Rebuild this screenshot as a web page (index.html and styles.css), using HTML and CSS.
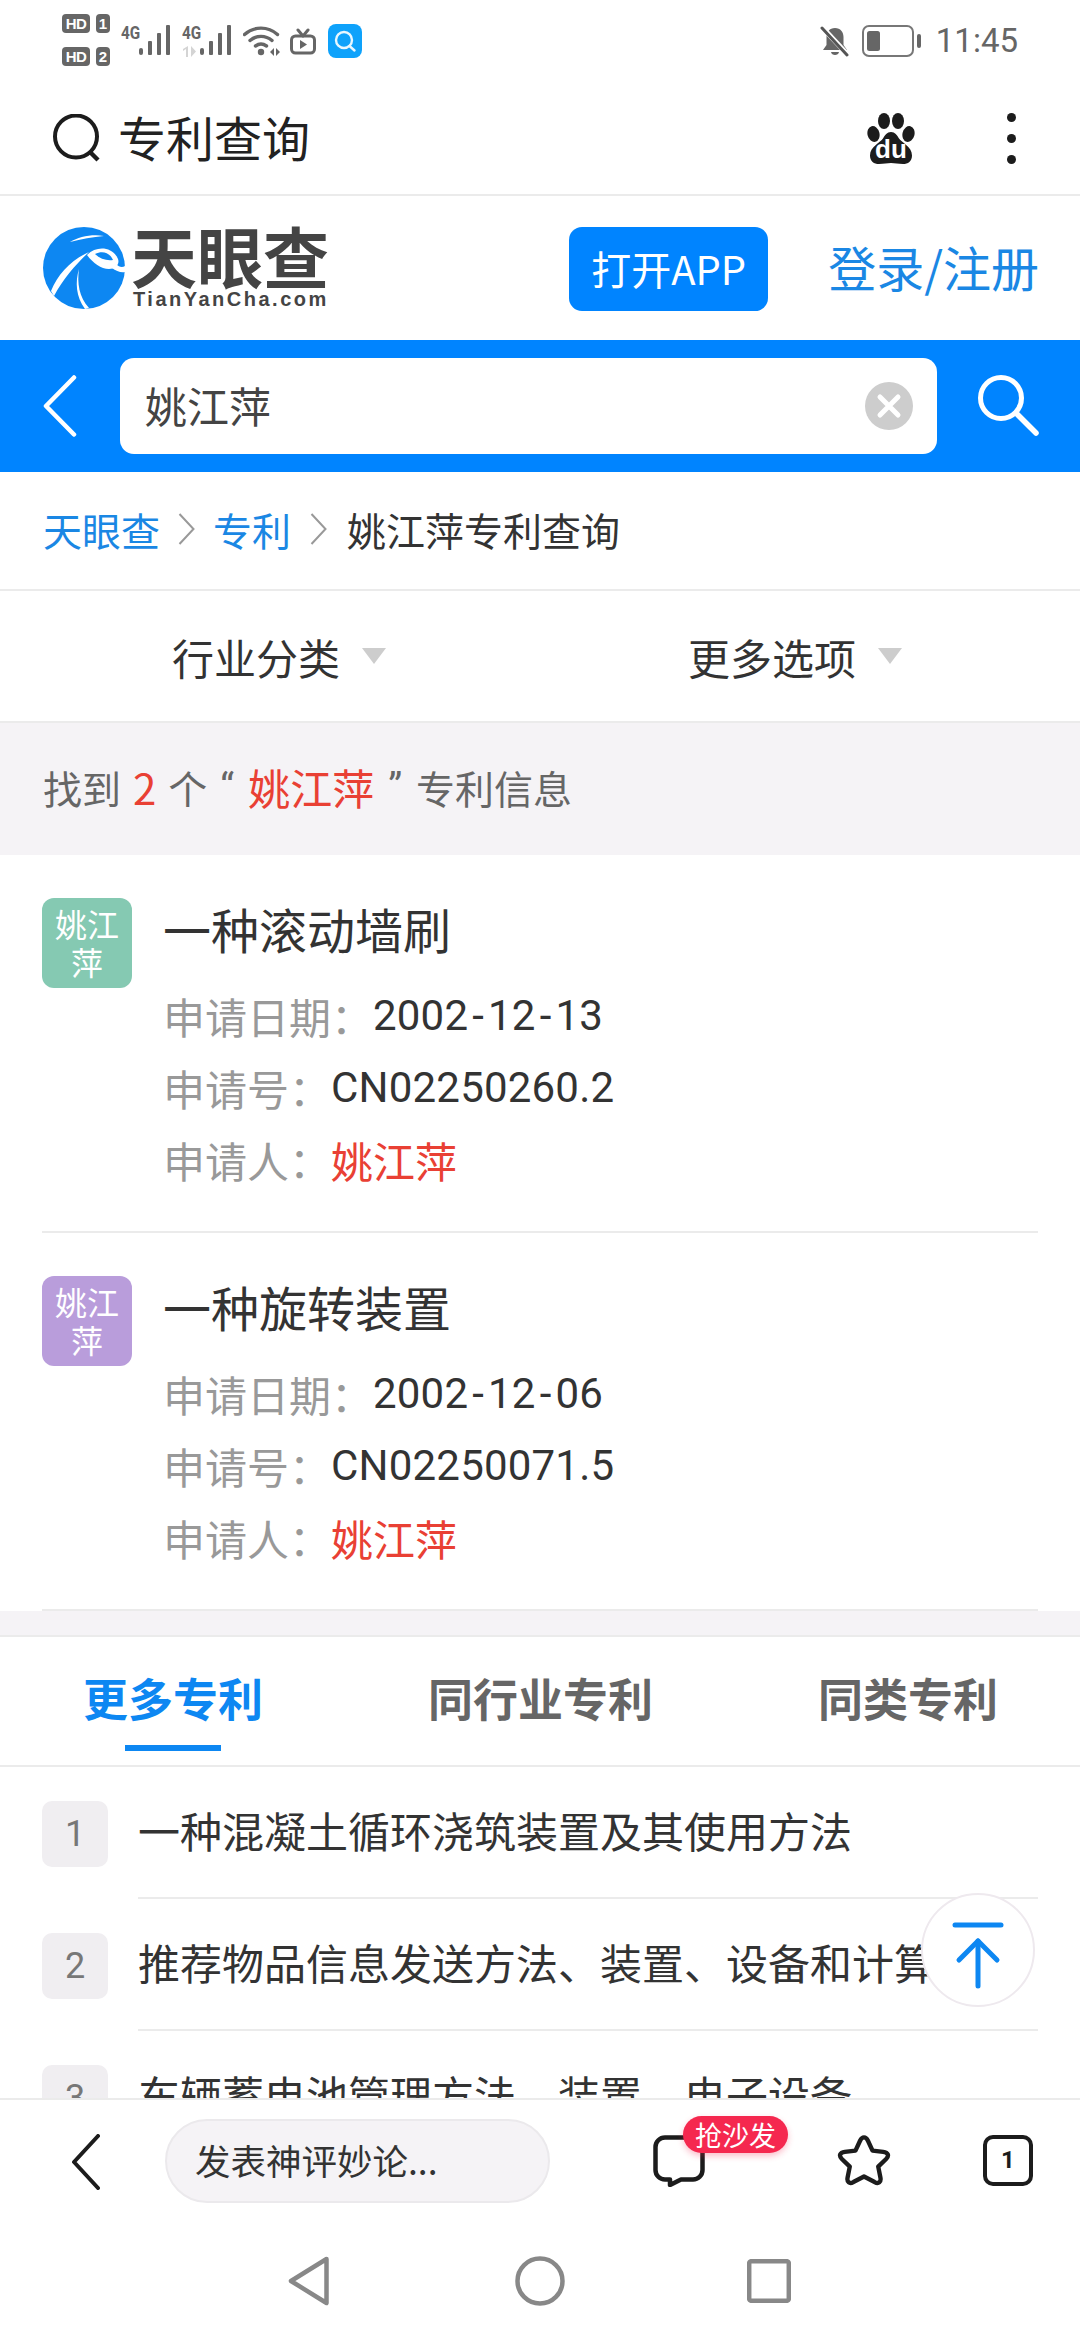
FILE: index.html
```html
<!DOCTYPE html>
<html lang="zh-CN">
<head>
<meta charset="utf-8">
<title>姚江萍专利查询</title>
<link rel="stylesheet" href="styles.css">
</head>
<body>
<div class="page">
  <div class="status">
    <div class="status-left">
      <div class="sims">
        <div class="sim"><span class="hd">HD</span><span class="simn">1</span></div>
        <div class="sim"><span class="hd">HD</span><span class="simn">2</span></div>
      </div>
      <div class="signal"><span class="fourg">4G</span>
        <svg width="32" height="30" viewBox="0 0 32 30"><g fill="#666"><rect x="0" y="23" width="4" height="7" rx="2"/><rect x="9" y="16" width="4" height="14" rx="1"/><rect x="18" y="8" width="4" height="22" rx="1"/><rect x="27" y="0" width="4" height="30" rx="1"/></g></svg>
      </div>
      <div class="signal"><span class="fourg">4G</span>
        <svg width="32" height="30" viewBox="0 0 32 30"><g fill="#666"><rect x="0" y="23" width="4" height="7" rx="2"/><rect x="9" y="16" width="4" height="14" rx="1"/><rect x="18" y="8" width="4" height="22" rx="1"/><rect x="27" y="0" width="4" height="30" rx="1"/></g></svg>
        <svg class="updown" width="15" height="11" viewBox="0 0 15 11"><path d="M6 0v11H4V3L1 5V3zM9 0l5 5.500-5 5.500z" fill="#d4d4d4"/></svg>
      </div>
      <svg class="wifi" width="38" height="31" viewBox="0 0 38 31"><g fill="none" stroke="#666" stroke-width="3.4" stroke-linecap="round"><path d="M1.500 9.500C11 1 25 1 34.500 9.500"/><path d="M7 15.500C13.500 10 22.500 10 29 15.500"/><path d="M12.500 21C16 18.500 20 18.500 23.500 21"/></g><circle cx="18" cy="27" r="3.200" fill="#666"/><path d="M27 27l4-4v8zM33 23l4 4-4 4z" fill="#666"/></svg>
      <svg class="tv" width="26" height="27" viewBox="0 0 26 27"><g fill="none" stroke="#666" stroke-width="3" stroke-linecap="round" stroke-linejoin="round"><rect x="1.500" y="8" width="23" height="17" rx="4"/><path d="M8 2l5 6 5-6"/></g><path d="M10 12l7 4.500-7 4.500z" fill="#666"/></svg>
      <svg class="appicon" width="34" height="34" viewBox="0 0 34 34"><rect width="34" height="34" rx="8" fill="#0ea2fb"/><circle cx="16" cy="16" r="8" fill="none" stroke="#e8f7ff" stroke-width="2.400"/><path d="M21.500 22l5 4.500" stroke="#e8f7ff" stroke-width="2.400" stroke-linecap="round"/></svg>
    </div>
    <div class="status-right">
      <svg class="bell" width="30" height="31" viewBox="0 0 30 31"><path d="M15 2c-5.500 0-8.500 4-8.500 9v8L3 24h24l-3.500-5v-8c0-5-3-9-8.500-9z" fill="#666"/><path d="M11 26c.5 4 7.500 4 8 0z" fill="#666"/><path d="M2 1l26 28" stroke="#fff" stroke-width="5"/><path d="M2 2l25 27" stroke="#555" stroke-width="3" stroke-linecap="round"/></svg>
      <svg class="battery" width="60" height="32" viewBox="0 0 60 32"><rect x="1" y="1" width="50" height="30" rx="6" fill="none" stroke="#777" stroke-width="2"/><rect x="5" y="6" width="13" height="20" rx="2.500" fill="#666"/><rect x="55" y="9" width="4" height="14" rx="2" fill="#666"/></svg>
      <span class="time">11:45</span>
    </div>
  </div>

  <div class="browserbar">
    <div class="bb-left">
      <svg width="50" height="48" viewBox="0 0 50 48"><circle cx="24" cy="22.500" r="21" fill="none" stroke="#1c1c1c" stroke-width="4"/><path d="M38 38l8 8" stroke="#1c1c1c" stroke-width="4.500"/></svg>
      <span class="bb-query">专利查询</span>
    </div>
    <div class="bb-right">
      <svg class="paw" width="48" height="51" viewBox="0 0 48 51"><g fill="#1c1c1c"><ellipse cx="6.500" cy="21" rx="6" ry="8" transform="rotate(-14 6.500 21)"/><ellipse cx="17" cy="8" rx="6" ry="8"/><ellipse cx="31" cy="8" rx="6" ry="8"/><ellipse cx="41.500" cy="21" rx="6" ry="8" transform="rotate(14 41.500 21)"/><path d="M24 19c4 0 6 3 8 6.500 2.500 4 13 8 13 17 0 6-4 8.500-9 8.500-5 0-8-1-12-1s-7 1-12 1c-5 0-9-2.500-9-8.500 0-9 10.500-13 13-17 2-3.500 4-6.500 8-6.500z"/></g><text x="24" y="45" class="du">du</text></svg>
      <div class="dots"><i></i><i></i><i></i></div>
    </div>
  </div>

  <div class="content">
    <header class="sitehead">
      <div class="logo">
        <svg width="82" height="82" viewBox="0 0 82 82"><circle cx="41" cy="41" r="41" fill="#0d87f2"/><path d="M27 15C36 10 48 7 61 9 50 10 38 12 27 15z" fill="#fff"/><path d="M44 28C54 18 70 20 75 32 77 38 72 42 66 42 58 42 50 36 44 28z" fill="#fff"/><path d="M52 27C60 23 67 26 70 33 64 34 57 32 52 27z" fill="#0d87f2"/><path d="M73 37C76 40 79 41 82 39V45C78 46 73 44 69 41z" fill="#fff"/><path d="M8 64C15 47 28 33 46 25 34 36 20 52 11 69z" fill="#fff"/><path d="M36 42C34 56 36 70 46 81L42 82C33 70 32 55 36 42z" fill="#fff"/></svg>
        <div class="logotext">
          <span class="logo-cn">天眼查</span>
          <span class="logo-en">TianYanCha.com</span>
        </div>
      </div>
      <div class="head-actions">
        <span class="openapp">打开APP</span>
        <span class="login">登录/注册</span>
      </div>
    </header>

    <div class="searchbar">
      <svg width="34" height="62" viewBox="0 0 34 62"><path d="M31 2.500L3 31l28 28.500" fill="none" stroke="#fff" stroke-width="4.500" stroke-linecap="round" stroke-linejoin="round"/></svg>
      <div class="searchinput">
        <span class="searchtext">姚江萍</span>
        <svg width="48" height="48" viewBox="0 0 48 48"><circle cx="24" cy="24" r="24" fill="#cdcdcd"/><path d="M15 15l18 18M33 15L15 33" stroke="#fff" stroke-width="5" stroke-linecap="round"/></svg>
      </div>
      <svg class="searchbtn" width="62" height="62" viewBox="0 0 62 62"><circle cx="24" cy="23" r="20.500" fill="none" stroke="#fff" stroke-width="5"/><path d="M39 38l20 20" stroke="#fff" stroke-width="5.500" stroke-linecap="round"/></svg>
    </div>

    <nav class="crumbs">
      <a class="crumb-link">天眼查</a>
      <svg width="17" height="32" viewBox="0 0 17 32"><path d="M1.500 1l14 15-14 15" fill="none" stroke="#999" stroke-width="2"/></svg>
      <a class="crumb-link">专利</a>
      <svg class="crumb-last" width="17" height="32" viewBox="0 0 17 32"><path d="M1.500 1l14 15-14 15" fill="none" stroke="#999" stroke-width="2"/></svg>
      <span class="crumb-cur">姚江萍专利查询</span>
    </nav>

    <div class="filters">
      <div class="filter"><span>行业分类</span><i class="tri"></i></div>
      <div class="filter"><span>更多选项</span><i class="tri"></i></div>
    </div>

    <div class="summary">
      <span>找到</span><span class="red num">2</span><span>个</span><span class="quote">“</span><span class="red name">姚江萍</span><span class="quote">”</span><span class="tail">专利信息</span>
    </div>

    <section class="patents">
      <article class="patent">
        <div class="avatar green">姚江萍</div>
        <div class="pbody">
          <h2 class="ptitle">一种滚动墙刷</h2>
          <div class="prow"><span class="plabel">申请日期：</span><span class="pval">2002<span class="dash">-</span>12<span class="dash">-</span>13</span></div>
          <div class="prow"><span class="plabel">申请号：</span><span class="pval">CN02250260.2</span></div>
          <div class="prow"><span class="plabel">申请人：</span><span class="red">姚江萍</span></div>
        </div>
      </article>
      <article class="patent">
        <div class="avatar purple">姚江萍</div>
        <div class="pbody">
          <h2 class="ptitle">一种旋转装置</h2>
          <div class="prow"><span class="plabel">申请日期：</span><span class="pval">2002<span class="dash">-</span>12<span class="dash">-</span>06</span></div>
          <div class="prow"><span class="plabel">申请号：</span><span class="pval">CN02250071.5</span></div>
          <div class="prow"><span class="plabel">申请人：</span><span class="red">姚江萍</span></div>
        </div>
      </article>
    </section>

    <div class="band"></div>

    <div class="tabs">
      <div class="tab active">更多专利</div>
      <div class="tab">同行业专利</div>
      <div class="tab">同类专利</div>
    </div>

    <ol class="morelist">
      <li class="moreitem"><span class="rank">1</span><span class="moretext">一种混凝土循环浇筑装置及其使用方法</span></li>
      <li class="moreitem"><span class="rank">2</span><span class="moretext">推荐物品信息发送方法、装置、设备和计算机</span></li>
      <li class="moreitem"><span class="rank">3</span><span class="moretext">车辆蓄电池管理方法、装置、电子设备</span></li>
    </ol>

    <div class="totop">
      <svg width="52" height="68" viewBox="0 0 52 68"><g fill="none" stroke="#0d87f2" stroke-width="5" stroke-linecap="round" stroke-linejoin="round"><path d="M3 3h46"/><path d="M7 38l19-19 19 19"/><path d="M26 19v45"/></g></svg>
    </div>
  </div>

  <div class="actionbar">
    <svg class="ab-back" width="30" height="56" viewBox="0 0 30 56"><path d="M27 2L3 28l24 26" fill="none" stroke="#1c1c1c" stroke-width="4" stroke-linecap="round" stroke-linejoin="round"/></svg>
    <div class="comment-input">发表神评妙论...</div>
    <div class="comment-icon">
      <svg width="52" height="52" viewBox="0 0 52 52"><path d="M12 2.500h28a9.500 9.500 0 0 1 9.500 9.500v23a9.500 9.500 0 0 1-9.500 9.500H28L17 50v-5.500h-5A9.500 9.500 0 0 1 2.500 35V12A9.500 9.500 0 0 1 12 2.500z" fill="none" stroke="#1c1c1c" stroke-width="4.500" stroke-linejoin="round"/></svg>
      <span class="sofa">抢沙发</span>
    </div>
    <svg class="ab-star" width="54" height="53" viewBox="2 1 52 49.500"><path d="M28 3.500c2 0 3 1.500 3.800 3.200l4.400 9.600 10.300 1.200c4.800.6 6 3.500 2.800 6.800l-7.600 7.400 2.100 10.400c.9 4.500-1.800 6.500-5.600 4.400L28 41.200l-10.200 5.300c-3.800 2.100-6.500.1-5.600-4.400l2.100-10.400-7.600-7.400c-3.200-3.300-2-6.200 2.800-6.800l10.300-1.200 4.400-9.600C25 5 26 3.500 28 3.500z" fill="none" stroke="#1c1c1c" stroke-width="4.200" stroke-linejoin="round"/></svg>
    <div class="tabcount">1</div>
  </div>

  <div class="navbar">
    <svg width="42" height="50" viewBox="0 0 42 50"><path d="M38.500 3L3 25l35.500 22z" fill="none" stroke="#888" stroke-width="4.500" stroke-linejoin="round"/></svg>
    <svg width="50" height="50" viewBox="0 0 50 50"><circle cx="25" cy="25" r="22.500" fill="none" stroke="#888" stroke-width="4.500"/></svg>
    <svg width="44" height="44" viewBox="0 0 44 44"><rect x="2.200" y="2.200" width="39.600" height="39.600" rx="2" fill="none" stroke="#888" stroke-width="4.500"/></svg>
  </div>
</div>
</body>
</html>
```
FILE: styles.css
```css
* { box-sizing: border-box; }
html, body { margin: 0; padding: 0; background: #fff; }
body { font-family: "Noto Sans CJK SC", "Noto Sans", sans-serif; color: #333; }
a { color: inherit; text-decoration: none; }
h2, ol { margin: 0; padding: 0; }
li { list-style: none; }
svg { display: block; flex: none; }
.red { color: #e94034; }

.page { width: 1080px; height: 2340px; display: flex; flex-direction: column; overflow: hidden; }

.status { height: 82px; flex: none; display: flex; justify-content: space-between; align-items: flex-start; padding: 14px 62px 0 62px; }
.status-left { display: flex; align-items: flex-start; }
.sims { display: flex; flex-direction: column; gap: 14px; width: 48px; }
.sim { display: flex; justify-content: space-between; height: 19px; }
.hd { width: 28px; background: #666; color: #fff; font: 700 15px/19px "Liberation Sans", sans-serif; text-align: center; border-radius: 4px; letter-spacing: -0.5px; }
.simn { width: 14px; background: #666; color: #fff; font: 700 15px/19px "Liberation Sans", sans-serif; text-align: center; border-radius: 4px; }
.signal { display: flex; margin: 11px 0 0 11px; width: 50px; position: relative; }
.fourg { font: 700 18px/15px "Roboto", sans-serif; color: #666; width: 19px; transform: scaleX(.85); transform-origin: left top; }
.signal svg { margin-left: -1px; }
.signal .updown { position: absolute; left: 0; top: 21px; margin: 0; }
.wifi { margin: 11px 0 0 11px; }
.tv { margin: 14px 0 0 9px; }
.appicon { margin: 10px 0 0 12px; }
.status-right { display: flex; align-items: center; margin-top: 10px; }
.bell { margin-right: 12px; }
.battery { margin-right: 14px; }
.time { font: 400 33px/34px "Roboto", sans-serif; color: #666; }

.browserbar { height: 114px; flex: none; border-bottom: 2px solid #ebebeb; display: flex; justify-content: space-between; align-items: center; padding: 0 64px 0 52px; }
.bb-left { display: flex; align-items: center; gap: 16px; }
.bb-query { font-size: 48px; line-height: 56px; padding-bottom: 4px; color: #222; }
.bb-right { display: flex; align-items: center; gap: 92px; }
.du { font: 700 26px "Liberation Sans", sans-serif; fill: #fff; text-anchor: middle; }
.dots { width: 9px; display: flex; flex-direction: column; gap: 12px; }
.dots i { width: 9px; height: 9px; border-radius: 50%; background: #1c1c1c; }

.content { flex: 1; min-height: 0; overflow: hidden; position: relative; }

.sitehead { height: 144px; display: flex; justify-content: space-between; align-items: center; padding: 0 41px 0 43px; }
.logo { display: flex; align-items: center; gap: 8px; }
.logotext { display: flex; flex-direction: column; padding-bottom: 4px; }
.logo-cn { font-size: 66px; font-weight: 700; line-height: 62px; color: #444; height: 66px; margin-left: -2px; }
.logo-en { font: 700 20px/20px "Liberation Sans", sans-serif; color: #444; letter-spacing: 2.500px; }
.head-actions { display: flex; align-items: center; gap: 60px; }
.openapp { width: 199px; height: 84px; background: #0084ff; color: #fff; border-radius: 13px; font-size: 40px; line-height: 82px; text-align: center; margin-top: 2px; }
.login { font-size: 48px; color: #1a87e4; line-height: 60px; padding-bottom: 4px; }

.searchbar { height: 132px; background: #0084ff; display: flex; align-items: center; padding: 0 41px 0 43px; }
.searchinput { margin-left: 43px; width: 820px; height: 96px; background: #fff; border-radius: 14px; display: flex; justify-content: space-between; align-items: center; padding: 0 24px 0 25px; }
.searchtext { font-size: 42px; line-height: 56px; padding-bottom: 2px; color: #444; }
.searchbtn { margin-left: 40px; }

.crumbs { height: 119px; border-bottom: 2px solid #ebebeb; display: flex; align-items: center; padding: 0 0 4px 43px; font-size: 39px; }
.crumb-link { color: #1a87e4; }
.crumbs svg { margin: 0 18px; }
.crumbs .crumb-last { margin: 0 20px 0 19px; }
.crumb-cur { color: #333; }

.filters { height: 132px; border-bottom: 2px solid #ebebeb; display: flex; justify-content: space-between; align-items: center; padding: 0 178px 0 172px; font-size: 42px; }
.filter { display: flex; align-items: center; gap: 22px; color: #333; }
.tri { width: 24px; height: 16px; background: #cdcdcd; clip-path: polygon(0 0, 100% 0, 50% 100%); }

.summary { height: 132px; background: #f5f3f6; display: flex; align-items: center; padding: 0 0 5px 43px; font-size: 39px; color: #666; }
.num { font-size: 42px; margin: 0 12px; }
.quote { font-family: "Roboto", sans-serif; margin-left: 13px; }
.name { font-size: 42px; margin-left: 14px; margin-right: 1px; }
.tail { margin-left: 14px; }

.patents { padding: 0 42px; }
.patent { display: flex; padding-top: 43px; height: 378px; border-bottom: 2px solid #ebebeb; }
.avatar { width: 90px; height: 90px; flex: none; border-radius: 12px; color: #fff; font-size: 32px; line-height: 38px; text-align: center; padding: 6px 13px 0; }
.green { background: #85c9b2; }
.purple { background: #b99ddb; }
.pbody { margin-left: 31px; }
.ptitle { font-size: 48px; font-weight: 400; line-height: 60px; color: #333; margin-top: 0; margin-bottom: 22px; }
.prow { height: 72px; font-size: 42px; line-height: 72px; display: flex; }
.plabel { color: #999; }
.pval { color: #333; font-family: "Roboto", sans-serif; letter-spacing: .2px; }
.dash { margin: 0 4px; }

.band { height: 26px; background: #f5f3f6; border-bottom: 2px solid #ebebeb; }

.tabs { height: 130px; border-bottom: 2px solid #ebebeb; display: flex; justify-content: space-between; align-items: center; padding: 0 82px 6px 83px; font-size: 45px; font-weight: 700; color: #666; }
.tab { position: relative; line-height: 60px; }
.tab.active { color: #0d87f2; }
.tab.active::after { content: ""; position: absolute; left: 42px; width: 96px; height: 6px; bottom: -23px; background: #0d87f2; }

.morelist { padding: 34px 42px 0; }
.moreitem { display: flex; height: 132px; position: relative; }
.rank { width: 66px; height: 66px; flex: none; background: #f0eef1; border-radius: 10px; color: #777; font: 400 36px/66px "Roboto", sans-serif; text-align: center; }
.moretext { margin-left: 30px; width: 900px; height: 98px; font-size: 42px; line-height: 58px; color: #333; white-space: nowrap; overflow: hidden; border-bottom: 2px solid #ebebeb; }

.totop { position: absolute; left: 921px; top: 1697px; width: 114px; height: 114px; border-radius: 50%; background: #fff; border: 2px solid #eee9ee; display: flex; align-items: flex-start; justify-content: center; padding-top: 27px; }

.actionbar { height: 138px; flex: none; background: #fff; border-top: 2px solid #ebebeb; display: flex; align-items: flex-start; padding-left: 71px; position: relative; }
.ab-back { margin-top: 34px; }
.comment-input { margin: 19px 0 0 64px; width: 385px; height: 84px; border-radius: 42px; background: #f5f3f6; border: 2px solid #ebe9ec; font-size: 35.500px; line-height: 78px; padding-left: 28px; color: #333; }
.comment-icon { position: relative; margin: 35px 0 0 103px; width: 52px; height: 52px; }
.sofa { position: absolute; left: 30px; top: -19px; width: 105px; height: 37px; border-radius: 19px; background: #f5284f; color: #fff; font-size: 27px; line-height: 37px; text-align: center; box-shadow: 0 3px 6px rgba(245, 40, 79, .3); }
.ab-star { margin: 34px 0 0 132px; }
.tabcount { margin: 35px 0 0 92px; width: 50px; height: 51px; border: 4.500px solid #1c1c1c; border-radius: 10px; font: 700 24px/42px "Roboto", sans-serif; text-align: center; color: #1c1c1c; }

.navbar { height: 104px; flex: none; background: #fff; display: flex; align-items: flex-start; padding: 20px 0 0 288px; gap: 185px; }
.navbar svg:nth-child(3) { margin-left: -3px; margin-top: 3px; }
```
